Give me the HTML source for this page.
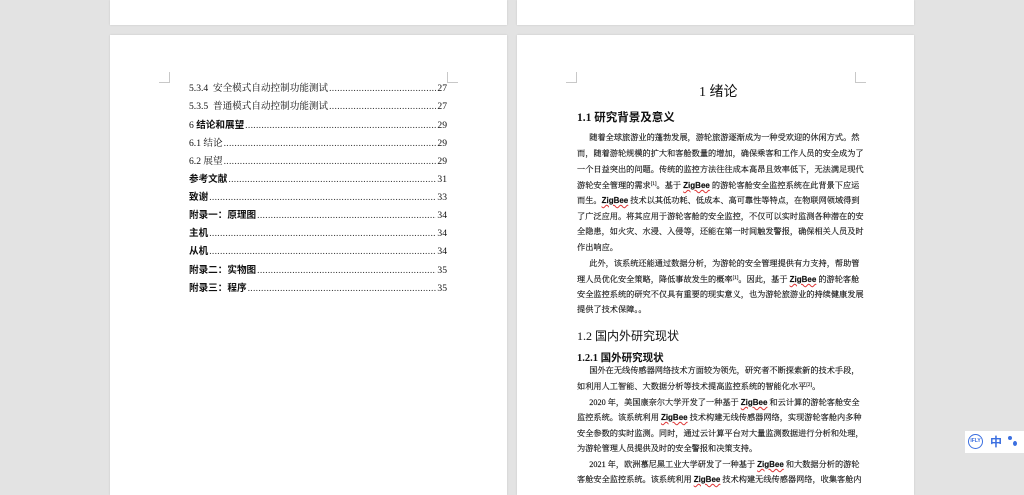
<!DOCTYPE html><html><head><meta charset="utf-8"><style>
body{margin:0;width:1024px;height:483px;background:#e3e3e3;position:relative;overflow:hidden;font-family:"Liberation Serif","Noto Serif CJK SC",serif;color:#111}
.pg{position:absolute;background:#fff;box-shadow:0 0 2px rgba(0,0,0,.12)}
.c{position:absolute;width:10px;height:10px;border-color:#c8c8c8;border-style:solid;border-width:0}
.t{position:absolute;left:189px;width:258px;font-size:9.6px;display:flex;white-space:nowrap;line-height:12px}
.t b{font-family:"Liberation Sans","Noto Sans CJK SC",sans-serif}
.t .d{flex:1;overflow:hidden;margin:0 1px;color:#333}
.t .d:after{content:"........................................................................................................................................................................";letter-spacing:0.3px}
.l{position:absolute;left:577px;width:278px;font-size:8.2px;line-height:12px;height:12px;text-align:justify;text-align-last:justify;white-space:nowrap;color:#111;-webkit-text-stroke:0.15px #111}
.l.e{text-align-last:left}
sup{font-size:5px;line-height:0;vertical-align:3px}
u{text-decoration:underline wavy #d33;text-decoration-thickness:0.6px;font-family:"Liberation Sans",sans-serif;font-weight:bold;font-size:8px;line-height:0}
.h{position:absolute;font-family:"Liberation Serif","Noto Sans CJK SC",sans-serif;color:#111;white-space:nowrap}
</style></head><body>
<div class="pg" style="left:110px;top:0;width:397px;height:25px"></div>
<div class="pg" style="left:517px;top:0;width:397px;height:25px"></div>
<div class="pg" style="left:110px;top:35px;width:397px;height:460px"></div>
<div class="pg" style="left:517px;top:35px;width:397px;height:460px"></div>
<div class="c" style="left:159px;top:72px;border-right-width:1px;border-bottom-width:1px"></div>
<div class="c" style="left:447px;top:72px;border-left-width:1px;border-bottom-width:1px"></div>
<div class="c" style="left:566px;top:72px;border-right-width:1px;border-bottom-width:1px"></div>
<div class="c" style="left:855px;top:72px;border-left-width:1px;border-bottom-width:1px"></div>

<div class="t" style="top:83px"><span>5.3.4&nbsp; 安全模式自动控制功能测试</span><span class="d"></span><span>27</span></div>
<div class="t" style="top:101px"><span>5.3.5&nbsp; 普通模式自动控制功能测试</span><span class="d"></span><span>27</span></div>
<div class="t" style="top:120px"><span>6 <b>结论和展望</b></span><span class="d"></span><span>29</span></div>
<div class="t" style="top:138px"><span>6.1 结论</span><span class="d"></span><span>29</span></div>
<div class="t" style="top:156px"><span>6.2 展望</span><span class="d"></span><span>29</span></div>
<div class="t" style="top:174px"><span><b>参考文献</b></span><span class="d"></span><span>31</span></div>
<div class="t" style="top:192px"><span><b>致谢</b></span><span class="d"></span><span>33</span></div>
<div class="t" style="top:210px"><span><b>附录一：原理图</b></span><span class="d"></span><span>34</span></div>
<div class="t" style="top:228px"><span><b>主机</b></span><span class="d"></span><span>34</span></div>
<div class="t" style="top:246px"><span><b>从机</b></span><span class="d"></span><span>34</span></div>
<div class="t" style="top:265px"><span><b>附录二：实物图</b></span><span class="d"></span><span>35</span></div>
<div class="t" style="top:283px"><span><b>附录三：程序</b></span><span class="d"></span><span>35</span></div>

<div class="h" style="left:699px;top:81px;font-size:14px">1 绪论</div>
<div class="h" style="left:577px;top:109px;font-size:11.5px;font-weight:bold">1.1 研究背景及意义</div>
<div class="l" style="top:132px">&nbsp;&nbsp;&nbsp;&nbsp;&nbsp;&nbsp;随着全球旅游业的蓬勃发展，游轮旅游逐渐成为一种受欢迎的休闲方式。然</div>
<div class="l" style="top:148px">而，随着游轮规模的扩大和客舱数量的增加，确保乘客和工作人员的安全成为了</div>
<div class="l" style="top:164px">一个日益突出的问题。传统的监控方法往往成本高昂且效率低下，无法满足现代</div>
<div class="l" style="top:180px">游轮安全管理的需求<sup>[1]</sup>。基于 <u>ZigBee</u> 的游轮客舱安全监控系统在此背景下应运</div>
<div class="l" style="top:195px">而生。<u>ZigBee</u> 技术以其低功耗、低成本、高可靠性等特点，在物联网领域得到</div>
<div class="l" style="top:211px">了广泛应用。将其应用于游轮客舱的安全监控，不仅可以实时监测各种潜在的安</div>
<div class="l" style="top:226px">全隐患，如火灾、水浸、入侵等，还能在第一时间触发警报，确保相关人员及时</div>
<div class="l e" style="top:242px">作出响应。</div>
<div class="l" style="top:258px">&nbsp;&nbsp;&nbsp;&nbsp;&nbsp;&nbsp;此外，该系统还能通过数据分析，为游轮的安全管理提供有力支持，帮助管</div>
<div class="l" style="top:274px">理人员优化安全策略，降低事故发生的概率<sup>[1]</sup>。因此，基于 <u>ZigBee</u> 的游轮客舱</div>
<div class="l" style="top:289px">安全监控系统的研究不仅具有重要的现实意义，也为游轮旅游业的持续健康发展</div>
<div class="l e" style="top:304px">提供了技术保障。。</div>
<div class="h" style="left:577px;top:327px;font-size:12px">1.2 国内外研究现状</div>
<div class="h" style="left:577px;top:350px;font-size:10.5px;font-weight:bold">1.2.1 国外研究现状</div>
<div class="l" style="top:365px">&nbsp;&nbsp;&nbsp;&nbsp;&nbsp;&nbsp;国外在无线传感器网络技术方面较为领先，研究者不断探索新的技术手段，</div>
<div class="l e" style="top:381px">如利用人工智能、大数据分析等技术提高监控系统的智能化水平<sup>[2]</sup>。</div>
<div class="l" style="top:397px">&nbsp;&nbsp;&nbsp;&nbsp;&nbsp;&nbsp;2020 年，美国康奈尔大学开发了一种基于 <u>ZigBee</u> 和云计算的游轮客舱安全</div>
<div class="l" style="top:412px">监控系统。该系统利用 <u>ZigBee</u> 技术构建无线传感器网络，实现游轮客舱内多种</div>
<div class="l" style="top:428px">安全参数的实时监测。同时，通过云计算平台对大量监测数据进行分析和处理，</div>
<div class="l e" style="top:443px">为游轮管理人员提供及时的安全警报和决策支持。</div>
<div class="l" style="top:459px">&nbsp;&nbsp;&nbsp;&nbsp;&nbsp;&nbsp;2021 年，欧洲慕尼黑工业大学研发了一种基于 <u>ZigBee</u> 和大数据分析的游轮</div>
<div class="l" style="top:474px">客舱安全监控系统。该系统利用 <u>ZigBee</u> 技术构建无线传感器网络，收集客舱内</div>

<div style="position:absolute;left:965px;top:431px;width:59px;height:22px;background:#fff"></div>
<div style="position:absolute;left:968px;top:434px;width:13px;height:13px;border:1.5px solid #3b6fe0;border-radius:50%;font:bold 5px 'Liberation Sans',sans-serif;color:#3b6fe0;text-align:center;line-height:13px">IFLY</div>
<div style="position:absolute;left:990px;top:433px;font:bold 12px 'Noto Sans CJK SC',sans-serif;color:#3b6fe0">中</div>
<div style="position:absolute;left:1008px;top:436px;width:4px;height:4px;border-radius:50%;background:#3b6fe0"></div>
<div style="position:absolute;left:1013px;top:441px;width:4px;height:5px;border-radius:50%;background:#3b6fe0"></div>
</body></html>
